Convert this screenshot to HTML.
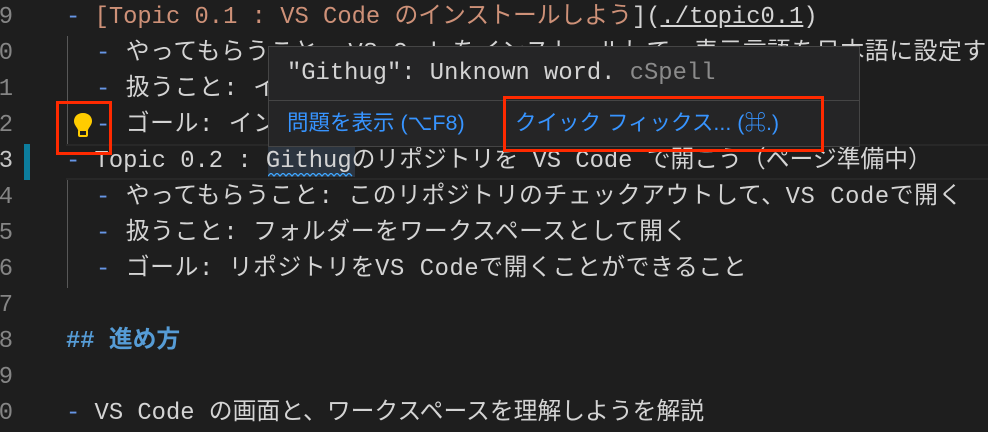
<!DOCTYPE html>
<html><head><meta charset="utf-8"><style>
body{margin:0;width:988px;height:426px;background:#1e1e1e;overflow:hidden;position:relative;font-family:"Liberation Mono","Noto Sans CJK JP",monospace;font-size:23.8px;color:#d4d4d4}
.ln{position:absolute;left:0;width:13px;text-align:right;color:#858585;height:36px;line-height:36px;overflow:hidden;direction:rtl}
.l{position:absolute;height:36px;line-height:36px;white-space:pre}
.d{color:#6796e6}
.s{color:#ce9178}
.u{text-decoration:underline}
.h{color:#569cd6;font-weight:bold}
.j{letter-spacing:0.6px}
</style></head><body>
<div class="ln" style="top:0">9</div>
<div class="ln" style="top:36px">0</div>
<div class="ln" style="top:72px">1</div>
<div class="ln" style="top:108px">2</div>
<div class="ln" style="top:144px;color:#c6c6c6">3</div>
<div class="ln" style="top:180px">4</div>
<div class="ln" style="top:216px">5</div>
<div class="ln" style="top:252px">6</div>
<div class="ln" style="top:288px">7</div>
<div class="ln" style="top:324px">8</div>
<div class="ln" style="top:360px">9</div>
<div class="ln" style="top:396px">0</div>
<div style="position:absolute;left:24px;top:144px;width:6px;height:36px;background:#0c7d9d"></div>
<div style="position:absolute;left:66px;top:144px;width:922px;height:32px;border-top:2px solid #282828;border-bottom:2px solid #282828"></div>
<div style="position:absolute;left:67px;top:36px;width:1px;height:108px;background:#585858"></div>
<div style="position:absolute;left:67px;top:180px;width:1px;height:108px;background:#585858"></div>
<div style="position:absolute;left:268px;top:147px;width:87px;height:30px;background:#2c3540"></div>
<svg style="position:absolute;left:268px;top:173px" width="88" height="6"><path d="M0 3 l3 -3 l3 3 l3 -3 l3 3 l3 -3 l3 3 l3 -3 l3 3 l3 -3 l3 3 l3 -3 l3 3 l3 -3 l3 3 l3 -3 l3 3 l3 -3 l3 3 l3 -3 l3 3 l3 -3 l3 3 l3 -3 l3 3 l3 -3 l3 3 l3 -3 l3 3" fill="none" stroke="#3ea6ff" stroke-width="1.3"/></svg>
<div class="l" style="left:66px;top:0"><span class="d">-</span> <span class="s">[Topic 0.1 : VS Code のインストールしよう</span>](<span class="u">./topic0.1</span>)</div>
<div class="l j" style="left:96px;top:36px"><span class="d">-</span> やってもらうこと: VS Codeをインストールして、表示言語を日本語に設定する</div>
<div class="l j" style="left:96px;top:72px"><span class="d">-</span> 扱うこと: インストール</div>
<div class="l j" style="left:96px;top:108px"><span class="d">-</span> ゴール: インストール</div>
<div class="l" style="left:66px;top:144px"><span class="d">-</span> Topic 0.2 : Githugのリポジトリを VS Code で開こう（ページ準備中）</div>
<div class="l j" style="left:96px;top:180px"><span class="d">-</span> やってもらうこと: このリポジトリのチェックアウトして、VS Codeで開く</div>
<div class="l j" style="left:96px;top:216px"><span class="d">-</span> 扱うこと: フォルダーをワークスペースとして開く</div>
<div class="l j" style="left:96px;top:252px"><span class="d">-</span> ゴール: リポジトリをVS Codeで開くことができること</div>
<div class="l h" style="left:66px;top:324px">## 進め方</div>
<div class="l" style="left:66px;top:396px"><span class="d">-</span> VS Code の画面と、ワークスペースを理解しようを解説</div>
<svg style="position:absolute;left:72px;top:112px" width="22" height="26" viewBox="0 0 22 26"><path d="M11 1 C5 1 2 5 2 9 C2 13 5 15 6 18 L16 18 C17 15 20 13 20 9 C20 5 17 1 11 1Z" fill="#ffcc00"/><rect x="7" y="18" width="8" height="6" rx="1" fill="none" stroke="#ffcc00" stroke-width="2"/></svg>
<div style="position:absolute;left:56px;top:101px;width:50px;height:48px;border:3px solid #ff2a00"></div>
<div style="position:absolute;left:268px;top:46px;width:590px;height:99px;background:#252526;border:1px solid #454545">
<div style="position:absolute;left:18px;top:0;height:53px;line-height:53px;white-space:pre">"Githug": Unknown word. <span style="color:#8b8b8b">cSpell</span></div>
<div style="position:absolute;left:0;top:53px;width:590px;height:1px;background:#454545"></div>
<div style="position:absolute;left:18px;top:54px;height:45px;line-height:45px;white-space:pre;font-family:'Liberation Sans','Noto Sans CJK JP',sans-serif;font-size:21.5px;color:#3794ff">問題を表示 (⌥F8)</div>
<div style="position:absolute;left:246px;top:54px;height:45px;line-height:45px;white-space:pre;font-family:'Liberation Sans','Noto Sans CJK JP',sans-serif;font-size:21.5px;color:#3794ff">クイック フィックス... (⌘.)</div>
</div>
<div style="position:absolute;left:503px;top:96px;width:315px;height:50px;border:3px solid #ff2a00"></div>
</body></html>
